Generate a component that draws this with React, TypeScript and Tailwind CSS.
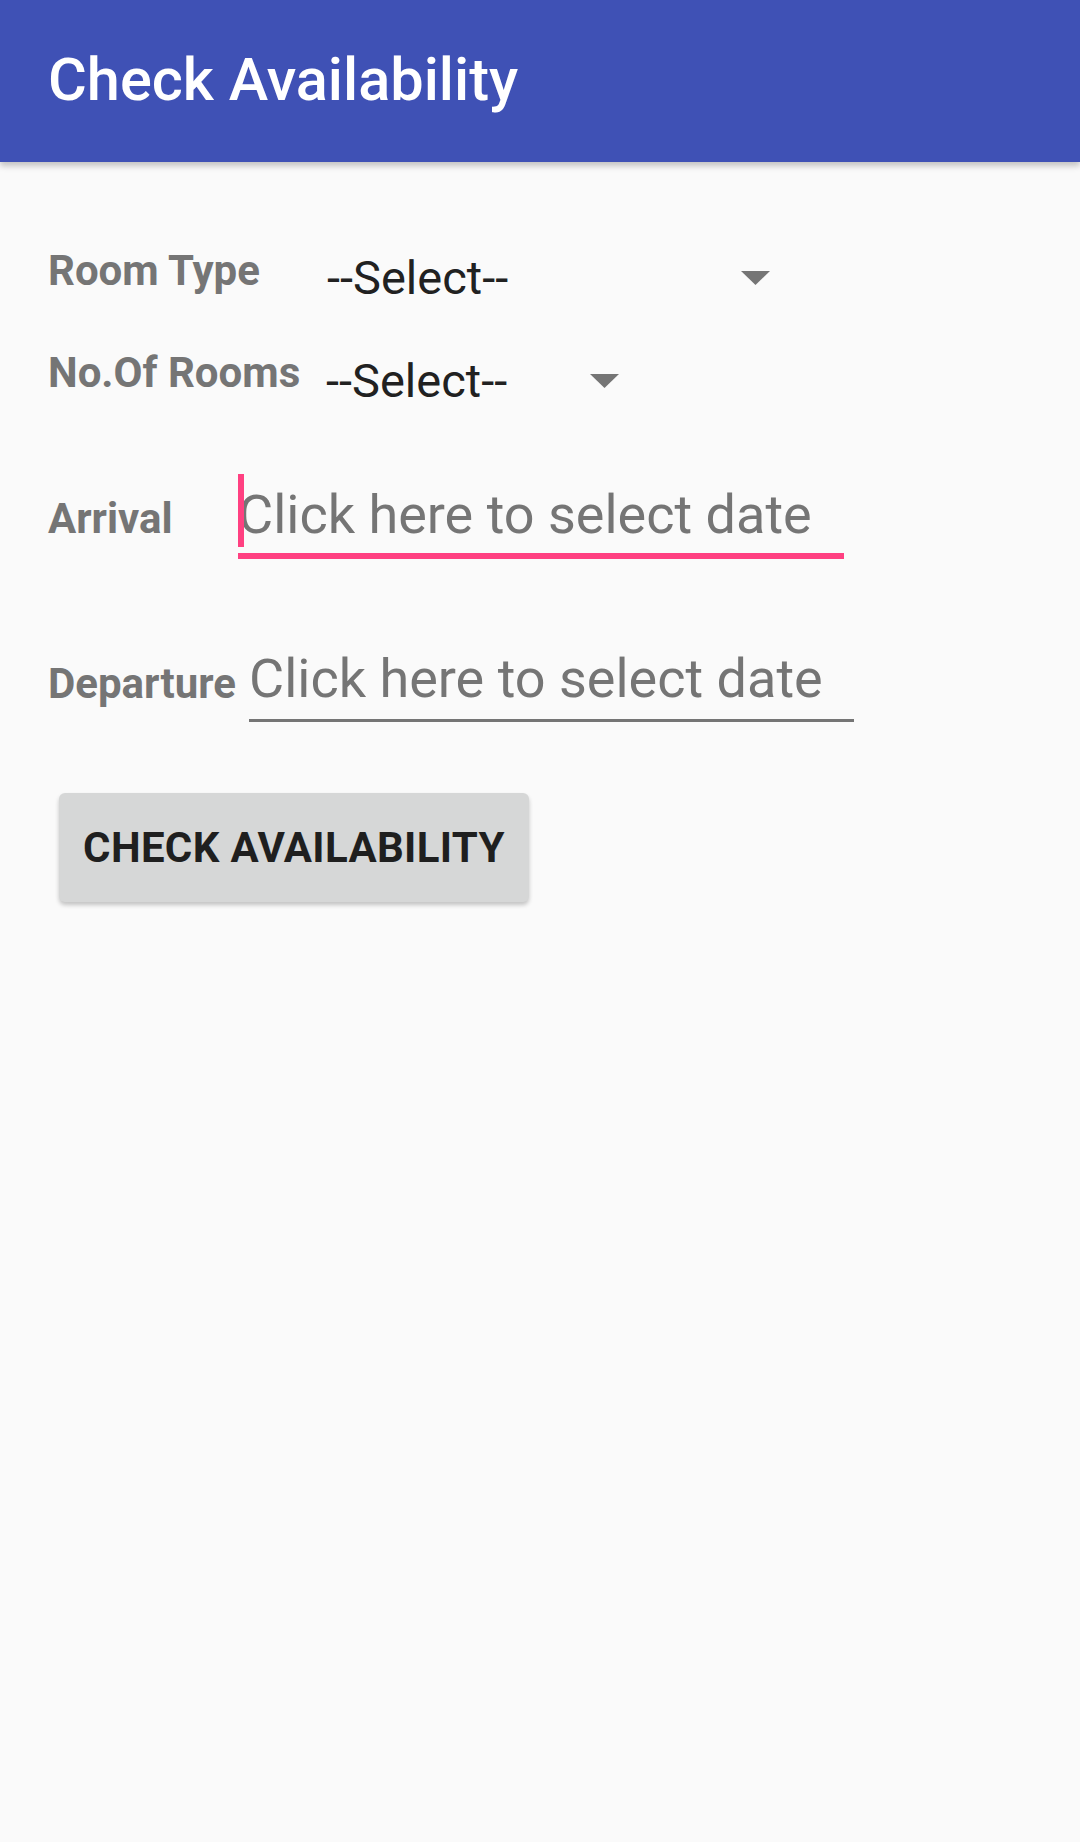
const labelCls = "text-[42px] leading-[42px] font-bold text-[#757575] shrink-0";

function DropArrow() {
  return (
    <svg viewBox="0 0 29 14" className="w-[29px] h-[14px] shrink-0" fill="#757575">
      <path d="M0 0h29L14.5 14z" />
    </svg>
  );
}

function Select({ width }: { width: string }) {
  return (
    <div className="flex items-center">
      <span className={`${width} text-[47px] leading-[48px] text-[#212121]`}>--Select--</span>
      <DropArrow />
    </div>
  );
}

export default function App() {
  return (
    <div className="min-h-[1842px] bg-[#fafafa] font-['Roboto',sans-serif]">
      {/* Toolbar */}
      <header className="h-[162px] bg-[#3f51b5] flex items-center pl-[48px] shadow-[0_4px_6px_rgba(0,0,0,0.22)] relative z-10">
        <h1 className="text-[59.5px] leading-none font-medium text-white">Check Availability</h1>
      </header>

      <main className="pl-[48px] pt-[88px]">
        {/* Room type */}
        <div className="flex items-start">
          <span className={`${labelCls} w-[279px]`}>Room Type</span>
          <div className="mt-[4px]">
            <Select width="w-[414px]" />
          </div>
        </div>

        {/* Number of rooms */}
        <div className="flex items-start mt-[50px]">
          <span className={`${labelCls} w-[278px]`}>No.Of Rooms</span>
          <div className="mt-[5px]">
            <Select width="w-[264px]" />
          </div>
        </div>

        {/* Arrival (focused) */}
        <div className="flex items-start mt-[69px]">
          <span className={`${labelCls} w-[190px] mt-[24px]`}>Arrival</span>
          <div className="relative w-[606px] pt-[14px] pb-[11px] border-b-[6px] border-[#ff4081]">
            <span className="absolute left-0 top-0 w-[6px] h-[73px] bg-[#ff4081]" />
            <span className="block text-[54px] leading-[54px] text-[#757575]">Click here to select date</span>
          </div>
        </div>

        {/* Departure */}
        <div className="flex items-start mt-[79px]">
          <span className={`${labelCls} w-[201px] mt-[25px]`}>Departure</span>
          <div className="w-[605px] pt-[14px] pb-[13px] border-b-[3px] border-[#757575]">
            <span className="block text-[54px] leading-[54px] text-[#757575]">Click here to select date</span>
          </div>
        </div>

        <button
          type="button"
          className="mt-[71px] ml-[11px] w-[470px] h-[109px] rounded-[6px] bg-[#d6d7d7] flex items-center justify-center text-[42px] font-bold tracking-[0.35px] text-[#1f1f1f] shadow-[0_3px_4px_rgba(0,0,0,0.22)]"
        >
          CHECK AVAILABILITY
        </button>
      </main>
    </div>
  );
}
